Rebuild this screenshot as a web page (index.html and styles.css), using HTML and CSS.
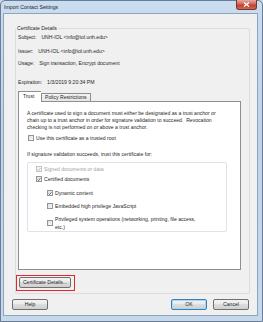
FILE: index.html
```html
<!DOCTYPE html>
<html>
<head>
<meta charset="utf-8">
<link rel="stylesheet" href="styles.css">
</head>
<body>
<div class="window">
  <div class="titlebar">
    <span class="title">Import Contact Settings</span>
    <div class="close"><svg width="7" height="5" viewBox="0 0 7 5"><path d="M1 0.5 L6 4.5 M6 0.5 L1 4.5" stroke="#fff" stroke-width="1.3"/></svg></div>
  </div>
  <div class="client">
    <fieldset class="group">
      <legend>Certificate Details</legend>
      <div class="info r1"><span class="lbl">Subject:</span><span>UNH-IOL &lt;info@iol.unh.edu&gt;</span></div>
      <div class="info r2"><span class="lbl">Issuer:</span><span>UNH-IOL &lt;info@iol.unh.edu&gt;</span></div>
      <div class="info r3"><span class="lbl">Usage:</span><span>Sign transaction, Encrypt document</span></div>
      <div class="info r4"><span class="lbl">Expiration:</span><span>1/3/2019 9:20:34 PM</span></div>
      <div class="tabs">
        <div class="tab active">Trust</div>
        <div class="tab">Policy Restrictions</div>
      </div>
      <div class="panel">
        <p class="para">A certificate used to sign a document must either be designated as a trust anchor or<br>chain up to a trust anchor in order for signature validation to succeed.&nbsp; Revocation<br>checking is not performed on or above a trust anchor.</p>
        <label class="chk root"><span class="box"></span><span>Use this certificate as a trusted root</span></label>
        <p class="ifsig">If signature validation succeeds, trust this certificate for:</p>
        <div class="inner">
          <label class="chk disabled"><span class="box checked"><svg width="5" height="5" viewBox="0 0 5 5"><path d="M0.8 2.6 L2 3.8 L4.3 0.9" fill="none" stroke="#a8a8a8" stroke-width="0.9"/></svg></span><span>Signed documents or data</span></label>
          <label class="chk i2"><span class="box checked"><svg width="5" height="5" viewBox="0 0 5 5"><path d="M0.8 2.6 L2 3.8 L4.3 0.9" fill="none" stroke="#2a3b55" stroke-width="0.9"/></svg></span><span>Certified documents</span></label>
          <label class="chk sub i3"><span class="box checked"><svg width="5" height="5" viewBox="0 0 5 5"><path d="M0.8 2.6 L2 3.8 L4.3 0.9" fill="none" stroke="#2a3b55" stroke-width="0.9"/></svg></span><span>Dynamic content</span></label>
          <label class="chk sub i4"><span class="box"></span><span>Embedded high privilege JavaScript</span></label>
          <label class="chk sub i5"><span class="box"></span><span>Privileged system operations (networking, printing, file access,<br>etc.)</span></label>
        </div>
      </div>
      <div class="highlight"><button class="btn cert">Certificate Details...</button></div>
    </fieldset>
    <div class="footer">
      <button class="btn">Help</button>
      <span class="spacer"></span>
      <button class="btn ok">OK</button>
      <button class="btn">Cancel</button>
    </div>
  </div>
</div>
</body>
</html>
```

FILE: styles.css
```css
* { box-sizing: border-box; }
html, body {
  margin: 0;
  padding: 0;
  width: 263px;
  height: 322px;
  overflow: hidden;
  background: #c9d9ec;
}
body {
  font-family: "Liberation Sans", Arial, sans-serif;
  font-size: 5.1px;
  color: #262626;
}
.window {
  width: 263px;
  height: 322px;
  display: flex;
  flex-direction: column;
  position: relative;
  background: linear-gradient(#cadcf0, #bfd2e8 40%, #c6d8ec);
  border: 1px solid #6a7d95;
  border-radius: 5px 5px 0 0;
}
.titlebar {
  height: 12px;
  display: flex;
  align-items: center;
  padding-left: 3px;
}
.title {
  font-size: 5.2px;
  color: #1c1c1c;
}
.close {
  position: absolute;
  top: -1px;
  right: 5px;
  width: 21px;
  height: 10px;
  display: flex;
  align-items: center;
  justify-content: center;
  background: linear-gradient(#e8a89c, #d0675a 45%, #c0412f 55%, #cf6a4e);
  border: 1px solid #7a3429;
  border-top: none;
  border-radius: 0 0 3px 3px;
}
.client {
  flex: 1;
  margin: 0 4px 5px 2px;
  background: #f0f0f0;
  border: 1px solid #8ea4be;
  display: flex;
  flex-direction: column;
}
.group {
  margin: 11px 7px 0 11px;
  padding: 0 0 2px 0;
  border: 1px solid #dcdcdc;
  border-radius: 2px;
  min-width: 0;
}
.group legend {
  padding: 0 1px;
  margin-left: 0;
  font-size: 5.1px;
  line-height: 6px;
  color: #262626;
}
.info {
  display: flex;
  line-height: 6px;
  padding-left: 2px;
  white-space: nowrap;
}
.info .lbl { margin-right: 5px; }
.r1 { margin-top: 3px; }
.r2 { margin-top: 8px; }
.r3 { margin-top: 6px; }
.r4 { margin-top: 13px; }
.tabs {
  display: flex;
  align-items: flex-end;
  margin: 6px 0 0 2px;
  height: 10px;
}
.tab {
  height: 8px;
  padding: 0 3px;
  line-height: 7px;
  border: 1px solid #8c8e94;
  border-bottom: none;
  background: linear-gradient(#f3f3f3, #e6e6e6);
  white-space: nowrap;
}
.tab.active {
  height: 11px;
  width: 23px;
  padding: 0 0 0 4px;
  line-height: 9px;
  background: #fff;
  margin-bottom: -1px;
  border-right: none;
  position: relative;
  z-index: 1;
}
.panel {
  margin: 0 8px 0 2px;
  height: 169px;
  background: #fff;
  border: 1px solid #8c8e94;
  padding: 8px 0 0 8px;
}
.para {
  margin: 0;
  line-height: 7px;
  white-space: nowrap;
}
.chk {
  display: flex;
  align-items: center;
  gap: 2px;
  line-height: 6px;
  white-space: nowrap;
}
.box {
  width: 6px;
  height: 6px;
  flex: none;
  border: 1px solid #949494;
  background: linear-gradient(135deg, #dedede, #fafafa);
  display: flex;
  align-items: center;
  justify-content: center;
}
.box svg { display: block; }
.root { margin: 4px 0 0 1px; }
.ifsig {
  margin: 10px 0 0 0;
  line-height: 6px;
}
.inner {
  margin: 5px 13px 0 0;
  height: 70px;
  border: 1px solid #dfe3e8;
  border-radius: 2px;
  padding: 3px 0 0 8px;
}
.disabled { color: #a2a2a2; }
.disabled .box { border-color: #c4c4c4; background: #f4f4f4; }
.i2 { margin-top: 4px; }
.sub { margin-left: 11px; }
.i3 { margin-top: 8px; }
.i4 { margin-top: 7px; }
.i5 { margin-top: 6px; line-height: 8px; }
.highlight {
  margin: 5px 0 0 0;
  width: 59px;
  height: 16px;
  border: 1.5px solid #e3262a;
  padding: 1px 2px;
}
.btn {
  font-family: "Liberation Sans", Arial, sans-serif;
  font-size: 5.1px;
  color: #262626;
  height: 11px;
  padding: 0;
  border: 1px solid #707070;
  border-radius: 2px;
  background: linear-gradient(#f3f3f3 0%, #ebebeb 45%, #dddddd 50%, #cfcfcf 100%);
  line-height: 9px;
}
.cert { width: 52px; height: 11px; }
.footer {
  display: flex;
  gap: 6px;
  margin: 5px 8px 0 8px;
}
.footer .btn { width: 36px; }
.spacer { flex: 1; }
.ok {
  border-color: #3c7fb1;
  box-shadow: inset 0 0 0 1px #a7d8f5;
}
```
